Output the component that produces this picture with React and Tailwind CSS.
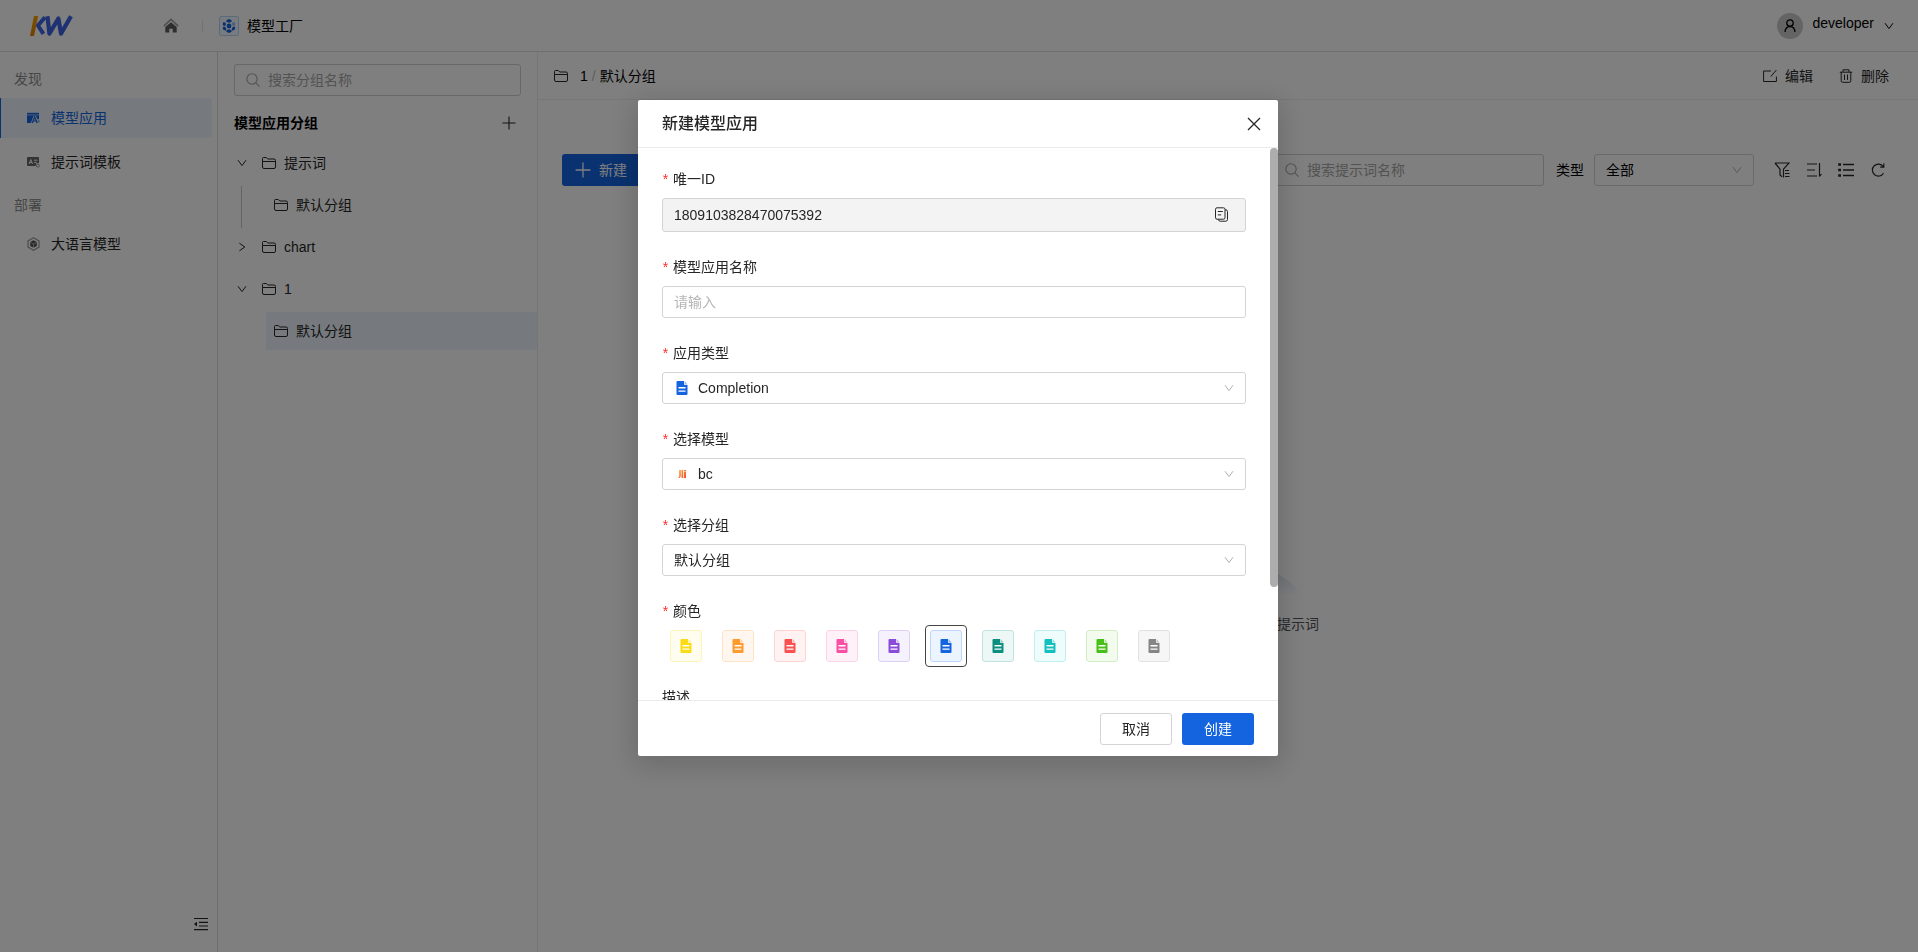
import React, { useState } from "react";

const Icon = ({ children, className = "size-4", box = "0 0 16 16", width = 1 }) => (
  <svg
    viewBox={box}
    className={`shrink-0 ${className}`}
    fill="none"
    stroke="currentColor"
    strokeWidth={width}
    aria-hidden="true"
  >
    {children}
  </svg>
);

const FolderIcon = () => (
  <Icon className="size-3.5" box="0 0 14 14" width={1}>
    <path d="M.5 5.500V2.500a1 1 0 0 1 1-1h2.800l1.500 1.500h6.200a1.500 1.500 0 0 1 1.500 1.500v6.500a1.500 1.500 0 0 1-1.500 1.500H2a1.500 1.500 0 0 1-1.500-1.500V5.500h13" />
  </Icon>
);

const ChevronDown = ({ className = "size-2.5" }) => (
  <Icon className={className} box="0 0 10 10" width={1}>
    <path d="M1 2.200 5 7.600 9 2.200" />
  </Icon>
);

const ChevronRight = () => (
  <Icon className="size-2.5" box="0 0 10 10" width={1}>
    <path d="M2.400 1.200 7.800 5 2.400 8.800" />
  </Icon>
);

const PlusIcon = ({ className = "size-3.5" }) => (
  <Icon className={className} box="0 0 14 14" width={1.1}>
    <path d="M7 .5v13M.5 7h13" />
  </Icon>
);

const SearchIcon = () => (
  <Icon className="size-3.5 text-[#a6a6a6]" box="0 0 14 14" width={1.1}>
    <circle cx="6" cy="6" r="5.200" />
    <path d="m9.800 9.800 3.800 3.800" />
  </Icon>
);

const FileIcon = ({ className = "" }) => (
  <svg viewBox="0 0 12 14" className={`h-3.5 w-3 shrink-0 ${className}`} fill="currentColor" aria-hidden="true">
    <path d="M1.500 0H8v3a1 1 0 0 0 1 1h2.500v9a1 1 0 0 1-1 1h-9a1 1 0 0 1-1-1V1a1 1 0 0 1 1-1Z" />
    <path d="M8.600 0 11.500 3.400H9.400a.8.8 0 0 1-.8-.8Z" opacity=".45" />
    <path d="M2.500 6h7v1.400h-7zM2.500 9.400h7v1.400h-7z" fill="#fff" />
  </svg>
);

const Logo = () => (
  <svg viewBox="0 0 44 22" className="h-[22px] w-11" fill="none" aria-label="KW" role="img">
    <defs>
      <linearGradient id="logo-bar" x1="0" y1="1" x2="0" y2="0">
        <stop offset="0" stopColor="#e08200" />
        <stop offset="1" stopColor="#ff9f00" />
      </linearGradient>
    </defs>
    <path d="M4 1h4.200L4 21H0Z" fill="url(#logo-bar)" />
    <path d="M15 2.200 8 10.500l5.400 8.300" stroke="#3b62e6" strokeWidth="4" strokeLinejoin="round" />
    <path d="M17.500 1.200 19.400 18.600 28.400 3.500 31 18.600 41 1.200" stroke="#3b62e6" strokeWidth="4.200" strokeLinejoin="round" />
  </svg>
);

const HomeIcon = () => (
  <svg viewBox="0 0 16 16" className="size-4" fill="none" aria-hidden="true">
    <path d="M.8 8.200 8 1.400l7.200 6.800" stroke="#a0a0a0" strokeWidth="1.600" />
    <path d="M8 4.200 2.300 9v5.600h4v-3.800h3.400v3.800h4V9Z" fill="#5c5c5c" />
  </svg>
);

const FactoryIcon = () => (
  <span className="flex size-5 items-center justify-center rounded-xs border border-[#b5d6f8] bg-[#f2f8ff]">
    <svg viewBox="0 0 16 16" className="size-4" fill="#1464e0" aria-hidden="true">
      <circle cx="8" cy="8" r="2.400" />
      <path d="m8 1 2.600 1.300v1.500L8 4.800 5.400 3.800V2.300ZM8 15l-2.600-1.300v-1.500L8 11.200l2.600 1v1.500Z" />
      <path d="M2 4.200 4.800 4.600v2.600L3 8 1.800 7Z" />
      <path d="m1.800 9 1.800-.4 1.800 1.800-.6 2.400L2 11.600ZM14.200 9l-1.800-.4-1.800 1.800.6 2.400 2.800-1.200Z" />
      <path d="m14 4.200-2.800.4v2.600L13 8l1.200-1Z" opacity=".4" />
    </svg>
  </span>
);

const AppIcon = () => (
  <svg viewBox="0 0 13 12" className="h-3 w-[13px]" aria-hidden="true">
    <path d="M0 .8h12v1.800H0z" fill="currentColor" />
    <path d="M0 3.200h12v4h-1.500L8.800 4H6.600L3.800 11H0Z" fill="currentColor" />
    <path d="m5.200 11 2.500-6L10.200 11M6.200 9h3" stroke="currentColor" fill="none" strokeWidth="1.200" />
    <circle cx="11.600" cy="9.300" r="1.300" fill="currentColor" opacity=".4" />
  </svg>
);

const TemplateIcon = () => (
  <svg viewBox="0 0 13 12" className="h-3 w-[13px]" aria-hidden="true">
    <path d="M1 1h10a1 1 0 0 1 1 1v5H9.500L8.500 10H1a1 1 0 0 1-1-1V2a1 1 0 0 1 1-1Z" fill="#666" />
    <path d="m2 8 1.800-4.500L5.600 8M2.800 6.600h2M7 4.200h3.500M7 6.400h2.500" stroke="#fff" fill="none" strokeWidth="1" />
    <circle cx="10.900" cy="9.600" r="1.500" fill="none" stroke="#999" />
  </svg>
);

const ModelIcon = () => (
  <svg viewBox="0 0 13 14" className="h-3.5 w-[13px]" fill="none" aria-hidden="true">
    <path d="m6.500.8 5.500 3.100v6.200l-5.500 3.100L1 10.100V3.900Z" stroke="#9a9a9a" strokeWidth="1.200" />
    <path d="m6.500 3.200 3.300 1.800v4L6.500 10.800 3.200 9V5Z" fill="#555" />
    <path d="M6.500 11V7L3.400 5.300M6.500 7l3.100-1.700" stroke="#d0d0d0" strokeWidth=".7" />
  </svg>
);

function NavItem({ icon, label, active }) {
  return (
    <li className="mb-1">
      <a
        href="#"
        className={
          active
            ? "flex h-10 items-center gap-[11px] rounded-r-sm border-l border-[#1464e0] bg-[#ecf3fb] pl-[26px] text-[#1464e0]"
            : "flex h-10 items-center gap-[11px] border-l border-transparent pl-[26px]"
        }
      >
        {icon}
        {label}
      </a>
    </li>
  );
}

function TreeNode({ label, open, children }) {
  return (
    <li>
      <button type="button" className="mb-1 flex h-[38px] w-full items-center">
        <span className="flex w-[25px] justify-start pl-[3px]">{open ? <ChevronDown /> : <ChevronRight />}</span>
        <span className="flex items-center gap-2 pl-[3px]">
          <FolderIcon />
          {label}
        </span>
      </button>
      {children}
    </li>
  );
}

function Field({ label, htmlFor, required = true, children }) {
  return (
    <div className="mb-6">
      <label htmlFor={htmlFor} className="mb-2 flex h-[22px] items-center gap-1">
        {required && <span className="w-[7px] text-center text-[#ff2d2f]">*</span>}
        {label}
      </label>
      {children}
    </div>
  );
}

function SelectBox({ id, icon, options }) {
  return (
    <div className="relative">
      {icon && <span className="pointer-events-none absolute inset-y-0 left-3 flex w-4 items-center justify-center">{icon}</span>}
      <select
        id={id}
        className={
          icon
            ? "block h-8 w-full appearance-none rounded-[3px] border border-[#d4d4d4] bg-white pr-8 pl-[35px] outline-none"
            : "block h-8 w-full appearance-none rounded-[3px] border border-[#d4d4d4] bg-white pr-8 pl-[11px] outline-none"
        }
      >
        {options.map((o) => (
          <option key={o}>{o}</option>
        ))}
      </select>
      <span className="pointer-events-none absolute inset-y-0 right-3 flex items-center text-[#b0b0b0]">
        <ChevronDown />
      </span>
    </div>
  );
}

const SWATCHES = [
  { name: "黄色", style: "border-[#fff4b8] bg-[#fffdf0] text-[#fadb14]" },
  { name: "橙色", style: "border-[#ffe3c7] bg-[#fff7ef] text-[#ff9a2e]" },
  { name: "红色", style: "border-[#fdd3d3] bg-[#fff2f2] text-[#f95050]" },
  { name: "粉色", style: "border-[#fdd3e8] bg-[#fff1f8] text-[#f94fa5]" },
  { name: "紫色", style: "border-[#ddd0f5] bg-[#f6f2fd] text-[#8a4bdb]" },
  { name: "蓝色", style: "border-[#bdd6fa] bg-[#ecf4ff] text-[#1464e0]" },
  { name: "墨绿", style: "border-[#bfe3df] bg-[#ecf7f6] text-[#0a8f80]" },
  { name: "青色", style: "border-[#bfefef] bg-[#eefcfc] text-[#14bfbf]" },
  { name: "绿色", style: "border-[#d0edc3] bg-[#f2fbee] text-[#48bf19]" },
  { name: "灰色", style: "border-[#e2e2e2] bg-[#f6f6f6] text-[#858585]" },
];

function ColorPicker() {
  const [picked, setPicked] = useState("蓝色");
  return (
    <div className="-my-[5px] ml-[3px] flex gap-2.5">
      {SWATCHES.map(({ name, style }) => (
        <label
          key={name}
          className={
            picked === name
              ? "cursor-pointer rounded-sm border border-[#454545] p-1"
              : "cursor-pointer rounded-sm border border-transparent p-1"
          }
        >
          <input
            type="radio"
            name="color"
            aria-label={name}
            checked={picked === name}
            onChange={() => setPicked(name)}
            className="sr-only"
          />
          <span className={`flex size-8 items-center justify-center rounded-[3px] border ${style}`}>
            <FileIcon />
          </span>
        </label>
      ))}
    </div>
  );
}

function TopBar() {
  return (
    <header className="flex h-[52px] shrink-0 items-center border-b border-[#dcdcdc] pr-6 pl-[30px] text-black">
      <Logo />
      <a href="#" aria-label="首页" className="ml-[89px]">
        <HomeIcon />
      </a>
      <span className="ml-[23px] h-3 w-px bg-[#e4e4e4]" />
      <a href="#" className="ml-4 flex items-center gap-2">
        <FactoryIcon />
        模型工厂
      </a>
      <button type="button" className="ml-auto flex items-center gap-2.5">
        <span className="flex size-[26px] items-center justify-center rounded-full bg-[#c8c8c8]">
          <Icon className="size-3.5" box="0 0 14 14" width={1.3}>
            <circle cx="7" cy="4" r="3.200" />
            <path d="M2 13c.2-3.400 2-5.300 5-5.300s4.800 1.900 5 5.300" />
          </Icon>
        </span>
        <span className="mb-1.5">developer</span>
        <ChevronDown />
      </button>
    </header>
  );
}

function Sidebar() {
  return (
    <nav className="flex w-[218px] shrink-0 flex-col border-r border-[#dcdcdc] pt-2">
      <h2 className="flex h-[38px] items-center pl-3.5 text-[#8c8c8c]">发现</h2>
      <ul className="pr-[5px]">
        <NavItem icon={<AppIcon />} label="模型应用" active />
        <NavItem icon={<TemplateIcon />} label="提示词模板" />
      </ul>
      <h2 className="flex h-[38px] items-center pl-3.5 text-[#8c8c8c]">部署</h2>
      <ul className="pr-[5px]">
        <NavItem icon={<ModelIcon />} label="大语言模型" />
      </ul>
      <button type="button" aria-label="收起菜单" className="mt-auto mr-2 mb-5 self-end">
        <Icon box="0 0 16 16" width={1.200}>
          <path d="M1 2.500h14M6 6.300h9M6 10h9M1 13.600h14" />
          <path d="M4 5.800v4.600L1 8.100Z" fill="currentColor" stroke="none" />
        </Icon>
      </button>
    </nav>
  );
}

function GroupPanel() {
  return (
    <aside className="w-80 shrink-0 border-r border-[#ececec] pt-3 pl-4">
      <div className="mr-4 flex h-8 items-center gap-2 rounded-[3px] border border-[#d0d0d0] px-[11px]">
        <SearchIcon />
        <input
          type="search"
          aria-label="搜索分组名称"
          placeholder="搜索分组名称"
          className="w-full min-w-0 bg-transparent outline-none placeholder:text-[#a6a6a6]"
        />
      </div>
      <div className="mt-3 mr-[21px] mb-1.5 flex h-[30px] items-center justify-between">
        <h2 className="font-bold text-black">模型应用分组</h2>
        <button type="button" aria-label="新建分组">
          <PlusIcon />
        </button>
      </div>
      <ul>
        <TreeNode label="提示词" open>
          <ul className="ml-[7px] h-[42px] border-l border-[#c8c8c8]">
            <li className="flex h-[38px] items-center gap-2 pl-8">
              <FolderIcon />
              默认分组
            </li>
          </ul>
        </TreeNode>
        <TreeNode label="chart" />
        <TreeNode label="1" open>
          <ul className="ml-8">
            <li className="flex h-[38px] items-center gap-2 bg-[#ecf3fb] pl-2">
              <FolderIcon />
              默认分组
            </li>
          </ul>
        </TreeNode>
      </ul>
    </aside>
  );
}

function MainArea() {
  return (
    <main className="flex min-w-0 flex-1 flex-col">
      <div className="flex h-12 shrink-0 items-center border-b border-[#ececec] pr-[29px] pl-4">
        <FolderIcon />
        <div className="ml-3 flex items-center gap-1 text-black">
          <span>1</span>
          <span className="text-[#bdbdbd]">/</span>
          <span>默认分组</span>
        </div>
        <div className="ml-auto flex gap-[26px]">
          <button type="button" className="flex items-center gap-2">
            <Icon className="size-3.5" box="0 0 14 14" width={1}>
              <path d="M8 2H.6v10.500h12.800V7.500M7.800 7.500l5.600-6.500" />
            </Icon>
            编辑
          </button>
          <button type="button" className="flex items-center gap-2">
            <Icon className="size-3.5" box="0 0 14 14" width={1}>
              <path d="M.8 3.200h12.400M4 3V.8h6V3M2.200 3.200v8.600a1.500 1.500 0 0 0 1.500 1.500h6.600a1.500 1.500 0 0 0 1.500-1.500V3.200M5.500 5.500V11M8.500 5.500V11" />
            </Icon>
            删除
          </button>
        </div>
      </div>
      <div className="mt-[54px] flex h-8 items-center pr-8 pl-6">
        <button type="button" className="flex h-8 items-center gap-2 rounded-[3px] bg-[#1464e0] px-[13px] text-white">
          <PlusIcon className="size-4" />
          新建
        </button>
        <div className="ml-auto flex h-8 w-[271px] items-center gap-2 rounded-[3px] border border-[#d0d0d0] px-[11px]">
          <SearchIcon />
          <input
            type="search"
            aria-label="搜索提示词名称"
            placeholder="搜索提示词名称"
            className="w-full min-w-0 bg-transparent outline-none placeholder:text-[#a6a6a6]"
          />
        </div>
        <label htmlFor="kind" className="mr-2.5 ml-3 text-black">
          类型
        </label>
        <div className="w-40 text-black">
          <SelectBox id="kind" options={["全部", "Completion", "Chat"]} />
        </div>
        <div className="ml-5 flex gap-4">
          <button type="button" aria-label="筛选">
            <Icon width={1.200}>
              <path d="M1 1h14L9.500 7.200V15.400M1 1l5 6.200V13l2 1.800M11 8.500h4M11 11.500h4.500M11 14.500h4.500" />
            </Icon>
          </button>
          <button type="button" aria-label="排序">
            <Icon width={1.200}>
              <path d="M1 2h10M1 8h8M1 14h10M13.500 1v13.500M15.500 12l-2 2.500" />
            </Icon>
          </button>
          <button type="button" aria-label="列表">
            <Icon width={1.300}>
              <path d="M5 2.500h11M5 8h11M5 13.500h11" />
              <path d="M.2 2.500H3M.2 8H3M.2 13.500H3" strokeWidth="2.600" />
            </Icon>
          </button>
          <button type="button" aria-label="刷新">
            <Icon width={1.200}>
              <path d="M13.500 11.200A6 6 0 1 1 13.200 4.500M13.800 1.500v3.600h-3.600" />
            </Icon>
          </button>
        </div>
      </div>
      <div className="mt-[346px] flex flex-col items-center">
        <svg viewBox="0 0 152 66" className="h-[66px] w-[152px]" aria-hidden="true">
          <defs>
            <linearGradient id="dome" x1="0" y1="0" x2="0" y2="1">
              <stop offset="0" stopColor="#cfd7ec" />
              <stop offset="1" stopColor="#fff" />
            </linearGradient>
          </defs>
          <path d="M2 64C16 46 40 30 76 30s60 14 74 34Z" fill="url(#dome)" />
        </svg>
        <p className="mt-4 text-[#555]">暂无数据，请点击新建提示词</p>
      </div>
    </main>
  );
}

function CreateDialog() {
  return (
    <div className="fixed inset-0 flex items-start justify-center bg-black/50 pt-[100px] pr-0.5">
      <form
        role="dialog"
        aria-labelledby="dialog-title"
        onSubmit={(e) => e.preventDefault()}
        className="w-full max-w-[640px] rounded-xs bg-white shadow-[0_6px_28px_4px_rgba(0,0,0,0.16)]"
      >
        <div className="flex h-12 items-center justify-between border-b border-[#ebebeb] px-6">
          <h1 id="dialog-title" className="text-base font-medium">
            新建模型应用
          </h1>
          <button type="button" aria-label="关闭" className="-mr-2">
            <Icon width={1.300} className="size-4">
              <path d="m2 2 12 12M14 2 2 14" />
            </Icon>
          </button>
        </div>
        <div className="relative">
          <div className="max-h-[calc(100vh-400px)] overflow-y-auto pt-5 pr-8 pl-6 [scrollbar-width:none]">
            <Field label="唯一ID" htmlFor="uid">
              <div className="flex h-[34px] items-center rounded-[3px] border border-[#d4d4d4] bg-[#f3f3f3] pr-[15px] pl-[11px]">
                <input id="uid" readOnly defaultValue="1809103828470075392" className="min-w-0 flex-1 bg-transparent outline-none" />
                <button type="button" aria-label="复制">
                  <Icon width={1} className="size-4">
                    <path d="M3 .8h6.500a1.500 1.500 0 0 1 1.500 1.500v8.400a1.500 1.500 0 0 1-1.500 1.500H3a1.500 1.500 0 0 1-1.500-1.500V2.300A1.500 1.500 0 0 1 3 .8ZM3.800 4.500h5M3.800 7.900h3.400M11 2.800h.8a1.700 1.700 0 0 1 1.700 1.700v8a1.700 1.700 0 0 1-1.700 1.700H6.200a1.700 1.700 0 0 1-1.700-1.700v-.3" />
                  </Icon>
                </button>
              </div>
            </Field>
            <Field label="模型应用名称" htmlFor="app-name">
              <input
                id="app-name"
                placeholder="请输入"
                className="block h-8 w-full rounded-[3px] border border-[#d4d4d4] px-[11px] outline-none placeholder:text-[#b5b5b5]"
              />
            </Field>
            <Field label="应用类型" htmlFor="app-type">
              <SelectBox id="app-type" icon={<FileIcon className="text-[#1464e0]" />} options={["Completion", "Chat"]} />
            </Field>
            <Field label="选择模型" htmlFor="model">
              <SelectBox
                id="model"
                icon={
                  <svg viewBox="0 0 10 10" className="size-2.5" aria-hidden="true">
                    <defs>
                      <linearGradient id="bars" x1="0" y1="0" x2="1" y2="1">
                        <stop offset="0" stopColor="#fba53a" />
                        <stop offset="1" stopColor="#f5502a" />
                      </linearGradient>
                    </defs>
                    <path d="M2.200 1h1.600v6.500L2.600 9H1l1.200-1.500ZM4.500 1h1.700v8H4.500ZM7 1h2v1.300H7ZM7 2.800h2V9H7Z" fill="url(#bars)" />
                  </svg>
                }
                options={["bc"]}
              />
            </Field>
            <Field label="选择分组" htmlFor="group">
              <SelectBox id="group" options={["默认分组"]} />
            </Field>
            <Field label="颜色">
              <ColorPicker />
            </Field>
            <Field label="描述" htmlFor="desc" required={false}>
              <textarea
                id="desc"
                placeholder="请输入"
                className="block h-[102px] w-full resize-none rounded-[3px] border border-[#d4d4d4] px-[11px] py-1 outline-none placeholder:text-[#b5b5b5]"
              />
            </Field>
          </div>
          <span className="absolute top-0 right-0 h-[439px] w-2 rounded-full bg-[#adadad]" />
        </div>
        <div className="flex h-14 items-center justify-end gap-2.5 border-t border-[#ebebeb] px-6">
          <button type="button" className="h-8 w-[72px] rounded-[3px] border border-[#d4d4d4]">
            取消
          </button>
          <button type="submit" className="h-8 w-[72px] rounded-[3px] bg-[#1464e0] text-white">
            创建
          </button>
        </div>
      </form>
    </div>
  );
}

export default function App() {
  return (
    <div className="flex min-h-screen flex-col bg-white font-['Liberation_Sans','Noto_Sans_CJK_SC',sans-serif] text-sm text-[#262626]">
      <TopBar />
      <div className="flex flex-1">
        <Sidebar />
        <GroupPanel />
        <MainArea />
      </div>
      <CreateDialog />
    </div>
  );
}
